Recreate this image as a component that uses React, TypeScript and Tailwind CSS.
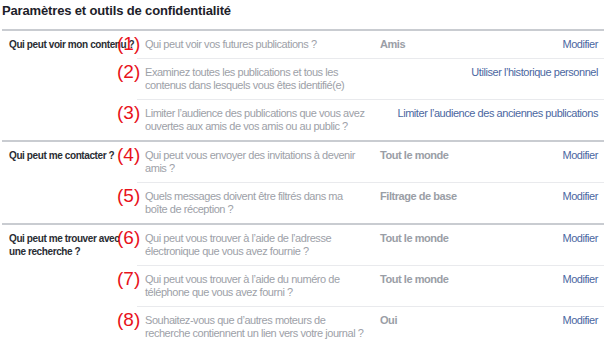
import React from 'react';

interface Row {
  num: number;
  text: string;
  value?: string;
  link: string;
}

interface Section {
  label: string;
  rows: Row[];
}

const sections: Section[] = [
  {
    label: 'Qui peut voir mon contenu ?',
    rows: [
      { num: 1, text: 'Qui peut voir vos futures publications ?', value: 'Amis', link: 'Modifier' },
      {
        num: 2,
        text: 'Examinez toutes les publications et tous les contenus dans lesquels vous êtes identifié(e)',
        link: 'Utiliser l’historique personnel',
      },
      {
        num: 3,
        text: 'Limiter l’audience des publications que vous avez ouvertes aux amis de vos amis ou au public ?',
        link: 'Limiter l’audience des anciennes publications',
      },
    ],
  },
  {
    label: 'Qui peut me contacter ?',
    rows: [
      { num: 4, text: 'Qui peut vous envoyer des invitations à devenir amis ?', value: 'Tout le monde', link: 'Modifier' },
      { num: 5, text: 'Quels messages doivent être filtrés dans ma boîte de réception ?', value: 'Filtrage de base', link: 'Modifier' },
    ],
  },
  {
    label: 'Qui peut me trouver avec une recherche ?',
    rows: [
      {
        num: 6,
        text: 'Qui peut vous trouver à l’aide de l’adresse électronique que vous avez fournie ?',
        value: 'Tout le monde',
        link: 'Modifier',
      },
      {
        num: 7,
        text: 'Qui peut vous trouver à l’aide du numéro de téléphone que vous avez fourni ?',
        value: 'Tout le monde',
        link: 'Modifier',
      },
      {
        num: 8,
        text: 'Souhaitez-vous que d’autres moteurs de recherche contiennent un lien vers votre journal ?',
        value: 'Oui',
        link: 'Modifier',
      },
    ],
  },
];

const SettingRow: React.FC<{ row: Row; first: boolean }> = ({ row, first }) => {
  return (
    <div className={`relative flex ${first ? '' : 'border-t border-[#e9eaed]'} pt-[7px] pb-[7px] text-[11px] leading-[13px] tracking-[-0.45px]`}>
      {/* numéro rouge, posé par-dessus */}
      <span className="absolute left-[-20px] top-[1px] text-[19px] leading-[24px] tracking-normal text-[#e8121b]">
        ({row.num})
      </span>
      <div className="w-[228px] shrink-0 pl-[8px] text-[#9da1a8]">{row.text}</div>
      <div className="flex-1 pl-[15px] font-bold text-[#9a9ea6]">{row.value}</div>
      <div className="shrink-0 whitespace-nowrap pr-[6px] text-[#4b67a1]">{row.link}</div>
    </div>
  );
};

export default function App() {
  return (
    <div className="w-[604px] h-[343px] overflow-hidden bg-white font-['Liberation_Sans',Arial,sans-serif]">
      <h2 className="h-[29px] pl-[2px] pt-[1px] text-[13px] leading-[20px] font-bold tracking-[-0.15px] text-[#1d2129]">
        Paramètres et outils de confidentialité
      </h2>
      {sections.map((s) => (
        <div key={s.label} className="relative flex border-t-2 border-[#c9ccd1] ml-[2px]">
          <div className="w-[135px] shrink-0 pl-[7px] pt-[7px] text-[10px] leading-[13px] font-bold tracking-[-0.4px] text-[#2a2d33]">
            <div className="w-[126px]">{s.label}</div>
          </div>
          <div className="flex-1">
            {s.rows.map((r, i) => (
              <SettingRow key={r.num} row={r} first={i === 0} />
            ))}
          </div>
        </div>
      ))}
    </div>
  );
}
